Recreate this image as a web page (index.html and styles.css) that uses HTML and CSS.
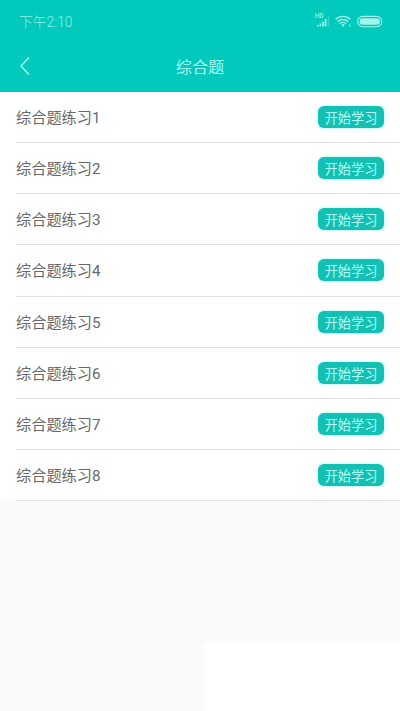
FILE: index.html
```html
<!DOCTYPE html>
<html lang="zh-CN">
<head>
<meta charset="utf-8">
<meta name="viewport" content="width=device-width, initial-scale=1">
<title>综合题</title>
<link rel="stylesheet" href="styles.css">
</head>
<body>
<div class="screen">
  <header class="header">
    <div class="status">
      <span class="time">下午2:10</span>
      <svg class="status-icons" width="70" height="20" viewBox="0 0 70 20">
        <text x="-.3" y="7.500" class="hd">HD</text>
        <g fill="#a0f6ed">
          <path d="M2 15h1.500v1.500H2zM4.600 13.500H6.200v3H4.600zM7.200 11.500h1.700v5H7.200zM9.700 9h1.700v7.500H9.700z"/>
          <path d="M12.700 6h1.200v10.500h-1.200z" opacity=".4"/>
          <path d="M34.200 14.500h1v2.500h-1z"/>
          <path d="M26.300 14.700a2.700 2.700 0 0 1 3.400 0L28 17z"/>
        </g>
        <g fill="none" stroke="#a0f6ed" stroke-width="1.400">
          <path d="M20.600 9.300a10.800 10.800 0 0 1 14.800 0M22.700 11.600a7.800 7.800 0 0 1 10.600 0M24.700 13.800a4.800 4.800 0 0 1 6.600 0"/>
          <rect x="42.600" y="6.400" width="24.200" height="10.300" rx="5.150" stroke-width="1.100"/>
        </g>
        <rect x="44.500" y="8.300" width="20.400" height="6.500" rx="3.250" fill="#a0f6ed"/>
      </svg>
    </div>
    <nav class="nav">
      <svg class="back" width="12" height="20" viewBox="0 0 12 20"><path d="M10 1.500 2 10l8 8.500" fill="none" stroke="#a6f8ef" stroke-width="1.500"/></svg>
      <h1 class="title">综合题</h1>
    </nav>
  </header>
  <ul class="list">
    <li class="row"><span class="name">综合题练习1</span><button class="start">开始学习</button></li>
    <li class="row"><span class="name">综合题练习2</span><button class="start">开始学习</button></li>
    <li class="row"><span class="name">综合题练习3</span><button class="start">开始学习</button></li>
    <li class="row"><span class="name">综合题练习4</span><button class="start">开始学习</button></li>
    <li class="row"><span class="name">综合题练习5</span><button class="start">开始学习</button></li>
    <li class="row"><span class="name">综合题练习6</span><button class="start">开始学习</button></li>
    <li class="row"><span class="name">综合题练习7</span><button class="start">开始学习</button></li>
    <li class="row"><span class="name">综合题练习8</span><button class="start">开始学习</button></li>
  </ul>
  <div class="glow"></div>
</div>
</body>
</html>
```
FILE: styles.css
```css
* { box-sizing: border-box; }
body {
  margin: 0;
  background: #fafafa;
  font-family: Roboto, "Noto Sans CJK SC", sans-serif;
  font-weight: 400;
}
.screen {
  height: 711px;
  display: flex;
  flex-direction: column;
  overflow: hidden;
}
.header {
  flex: none;
  height: 92px;
  background: #01c9bc;
  border-bottom: 1px solid #2fb5a9;
}
.status {
  height: 42px;
  padding: 0 15px 0 19px;
  display: flex;
  align-items: center;
  justify-content: space-between;
  color: #8cf2e8;
}
.time { font-size: 13.800px; font-weight: 300; }
.status-icons { margin-top: -2px; overflow: visible; }
.hd { font-size: 6.500px; font-weight: 500; fill: #a0f6ed; }
.nav {
  height: 47px;
  padding: 0 19px;
  display: grid;
  grid-template-columns: 12px 1fr 12px;
  align-items: center;
}
.title {
  margin: 0;
  text-align: center;
  font-size: 16.200px;
  font-weight: 400;
  color: #a6f8ef;
}
.list {
  flex: none;
  margin: 0;
  padding: 0;
  list-style: none;
  background: #fff;
}
.row {
  height: 51.125px;
  padding-right: 16px;
  margin-left: 16px;
  display: flex;
  align-items: center;
  justify-content: space-between;
  border-bottom: 1px solid #e2e2e2;
}
.name { padding-bottom: 2px; font-size: 15.200px; color: #686868; }
.start {
  width: 66px;
  height: 22px;
  padding: 3px 0 0;
  border: 0;
  border-radius: 6px;
  background: #13c1b4;
  box-shadow: 0 0 3px #8ff5ee;
  color: #b4fff8;
  font: inherit;
  font-size: 13.200px;
  line-height: 19px;
}
.glow {
  flex: 1;
  margin: 143px -20px -20px 205px;
  background: #fff;
  box-shadow: 0 0 18px #fff;
}
```
